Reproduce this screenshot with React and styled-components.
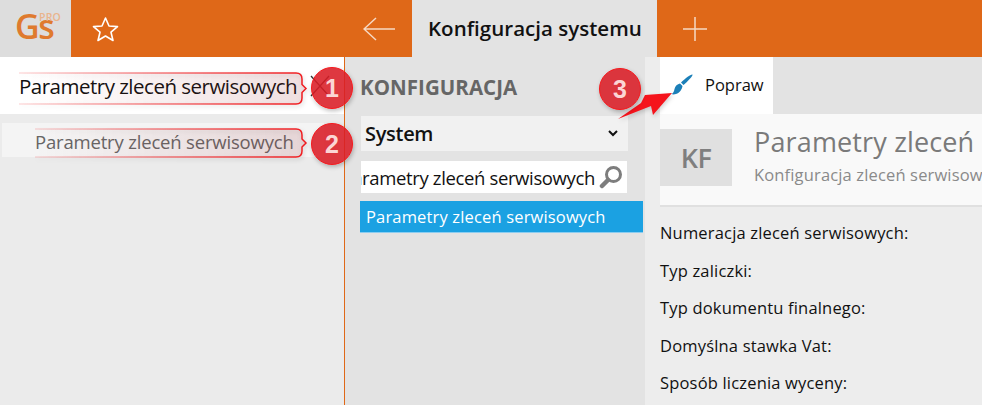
import React from "react";
import styled, { createGlobalStyle } from "styled-components";

const Global = createGlobalStyle`
  html, body { margin: 0; padding: 0; background: #ededed; }
  * { box-sizing: border-box; }
`;
const Page = styled.div`
  position: relative; width: 982px; height: 405px; overflow: hidden;
  font-family: "Open Sans", "Noto Sans", sans-serif; color: #111; background: #ededed;
  display: flex; flex-direction: column;
`;
const Header = styled.header`
  height: 57px; flex: none; display: flex; background: #df6818;
`;
const Logo = styled.div`
  width: 71px; background: #dddddd; color: #df7a2e; display: flex; align-items: flex-start;
  padding: 9px 0 0 15px;
`;
const LogoMark = styled.span`
  font-size: 34px; font-weight: 600; line-height: 1; letter-spacing: -1.4px; width: 24px;
`;
const Pro = styled.span`
  font-size: 10.5px; font-weight: 600; line-height: 1; margin-top: 3px; letter-spacing: 0.2px; color: #eab48c;
`;
const StarSlot = styled.div`
  width: 274px; padding-left: 21px; display: flex; align-items: center;
`;
const IconSlot = styled.div`
  width: ${p => p.$w}px; display: flex; align-items: center; justify-content: center;
`;
const ActiveTab = styled.div`
  width: 245px; background: #e3e3e3; padding: 0 0 2px 16px; display: flex; align-items: center;
  font-size: 20.5px; font-weight: 600; letter-spacing: 0.02px; color: #111;
`;
const Body = styled.div`flex: 1; display: flex; min-height: 0;`;
const Sidebar = styled.aside`
  width: 345px; flex: none; background: #ebebeb; border-right: 1px solid #df6818;
`;
const OpenItem = styled.div`
  height: 57px; background: #fff; padding: 0 14px 0 19px; display: flex; align-items: center;
  justify-content: space-between; font-size: 20.5px; letter-spacing: -0.5px; color: #111;
`;
const SubItem = styled.div`
  margin: 9px 0 0 2px; width: 322px; height: 34px; background: #f4f4f4; padding: 2px 0 0 33px;
  display: flex; align-items: center; font-size: 18.5px; letter-spacing: -0.18px; color: #666;
`;
const Middle = styled.section`
  width: 300px; flex: none; background: #e3e3e3; padding: 0 2px 0 15px;
  display: flex; flex-direction: column;
`;
const MidTitle = styled.h2`
  margin: 0; height: 59px; display: flex; align-items: center; font-size: 20.5px; font-weight: 700;
  color: #666; letter-spacing: 0.05px;
`;
const Select = styled.div`
  height: 35px; width: 267px; margin-left: 1px; background: #f1f1f1; padding: 0 10px 0 4px;
  display: flex; align-items: center; justify-content: space-between;
  font-size: 20px; font-weight: 600; letter-spacing: -0.3px;
`;
const Search = styled.div`
  height: 32px; width: 266px; margin: 10px 0 0 1px; background: #fff; display: flex;
  align-items: center; overflow: hidden; padding-right: 4px;
`;
const SearchText = styled.div`
  flex: 1; min-width: 0; display: flex; justify-content: flex-end; overflow: hidden; white-space: nowrap;
  font-size: 18.5px; letter-spacing: -0.36px; padding-right: 4px; color: #111;
`;
const ListItem = styled.div`
  height: 32px; margin-top: 8px; background: #1ba1e2; border-bottom: 1px solid #8ccdf0; color: #fff;
  padding-left: 6px; display: flex; align-items: center; font-size: 16.5px; letter-spacing: 0.16px;
`;
const Content = styled.main`
  flex: 1; min-width: 0; padding-left: 15px; background: #ededed; display: flex; flex-direction: column;
`;
const Toolbar = styled.div`height: 57px; flex: none; background: #e3e3e3; display: flex;`;
const ToolButton = styled.div`
  width: 113px; background: #fff; padding: 0 0 0 11px; display: flex; align-items: center; gap: 12px;
  font-size: 16.5px; letter-spacing: 0; padding-bottom: 2px;
`;
const Card = styled.div`
  height: 93px; flex: none; background: #f9f9f9; border-bottom: 2px solid #e0e0e0; display: flex;
  padding-top: 15px; gap: 22px; white-space: nowrap; overflow: hidden;
`;
const Badge = styled.div`
  width: 72px; height: 57px; flex: none; background: #e0e0e0; color: #7f7f7f; display: flex;
  align-items: center; justify-content: center; font-size: 27px; font-weight: 600; letter-spacing: -0.5px;
`;
const CardText = styled.div`display: flex; flex-direction: column;`;
const CardTitle = styled.div`
  font-size: 27px; line-height: 28px; color: #7a7a7a; letter-spacing: 0.15px; margin-top: -1px;
`;
const CardSub = styled.div`
  margin-top: 9px; font-size: 16.5px; line-height: 20px; color: #8a8a8a; letter-spacing: 0.15px;
`;
const Fields = styled.div`padding: 7px 0 0; display: flex; flex-direction: column;`;
const Field = styled.div`
  height: 37.5px; display: flex; align-items: center; font-size: 16.5px; letter-spacing: 0.18px; color: #111;
`;
const Overlay = styled.svg`
  position: absolute; left: 0; top: 0; width: 982px; height: 405px; pointer-events: none;
  filter: drop-shadow(1px 2px 2px rgba(0, 0, 0, 0.18));
`;
const Num = styled.div`
  position: absolute; left: ${p => p.$x - 21}px; top: ${p => p.$y - 21}px; width: 42px; height: 42px;
  border-radius: 50%; background: rgba(218, 28, 38, 0.88); border: 1.5px solid #f5181c;
  box-shadow: 1px 2px 4px rgba(0,0,0,.25); color: #fbd5d5; display: flex; align-items: center;
  justify-content: center; font-family: "Liberation Sans", sans-serif; font-weight: 700; font-size: 25px;
`;

const Callout = ({ id, x, y, w, h }) => {
  const r = x + w, m = y + h / 2;
  const d = `M${x} ${y} H${r - 6} Q${r} ${y} ${r} ${y + 6} V${m - 4} L${r + 4} ${m} L${r} ${m + 4} V${y + h - 6} Q${r} ${y + h} ${r - 6} ${y + h} H${x}`;
  return (
    <>
      <defs>
        <linearGradient id={id} gradientUnits="userSpaceOnUse" x1={x} x2={r} y1="0" y2="0">
          <stop offset="0" stopColor="#f01c20" stopOpacity="0.15" />
          <stop offset="1" stopColor="#f01c20" stopOpacity="1" />
        </linearGradient>
        <linearGradient id={id + "f"} gradientUnits="userSpaceOnUse" x1={x} x2={r} y1="0" y2="0">
          <stop offset="0" stopColor="#b03038" stopOpacity="0" />
          <stop offset="1" stopColor="#b03038" stopOpacity="0.13" />
        </linearGradient>
      </defs>
      <path d={d} fill={`url(#${id}f)`} stroke={`url(#${id})`} strokeWidth="1.5" />
    </>
  );
};

export default function App() {
  return (
    <Page>
      <Global />
      <Header>
        <Logo><LogoMark>Gs</LogoMark><Pro>PRO</Pro></Logo>
        <StarSlot>
          <svg width="27" height="26" viewBox="0 0 27 26" fill="none" stroke="#fff" strokeWidth="1.6" strokeLinejoin="round">
            <path d="M13.5 2 L17 10 L25.5 10.6 L19 16.2 L21 24.5 L13.5 20 L6 24.5 L8 16.2 L1.5 10.6 L10 10 Z" />
          </svg>
        </StarSlot>
        <IconSlot $w={67}>
          <svg width="32" height="24" viewBox="0 0 32 24" fill="none" stroke="#f6d9c4" strokeWidth="1.5">
            <path d="M32 12 H1 M13 1 L1 12 L13 23" />
          </svg>
        </IconSlot>
        <ActiveTab>Konfiguracja systemu</ActiveTab>
        <IconSlot $w={75}>
          <svg width="24" height="24" viewBox="0 0 24 24" fill="none" stroke="#f6d9c4" strokeWidth="1.5">
            <path d="M12 0 V24 M0 12 H24" />
          </svg>
        </IconSlot>
      </Header>
      <Body>
        <Sidebar>
          <OpenItem>
            <span>Parametry zleceń serwisowych</span>
            <svg width="20" height="22" viewBox="0 0 20 22" fill="none" stroke="#333" strokeWidth="1.3">
              <path d="M1 1 L19 21 M19 1 L1 21" />
            </svg>
          </OpenItem>
          <SubItem>Parametry zleceń serwisowych</SubItem>
        </Sidebar>
        <Middle>
          <MidTitle>KONFIGURACJA</MidTitle>
          <Select>
            System
            <svg width="10" height="7" viewBox="0 0 10 7" fill="none" stroke="#111" strokeWidth="2">
              <path d="M1 1 L5 5 L9 1" />
            </svg>
          </Select>
          <Search>
            <SearchText>Parametry zleceń serwisowych</SearchText>
            <svg width="24" height="24" viewBox="0 0 24 24" fill="none" stroke="#7d7d7d">
              <circle cx="14.5" cy="9.5" r="7" strokeWidth="3" />
              <path d="M9 15 L3 21" strokeWidth="4.5" strokeLinecap="round" />
            </svg>
          </Search>
          <ListItem>Parametry zleceń serwisowych</ListItem>
        </Middle>
        <Content>
          <Toolbar>
            <ToolButton>
              <svg width="22" height="22" viewBox="0 0 22 22" fill="#1b7fb8">
                <path d="M21.5 0.5 C22 2 17 7 12.5 11 L10 8.5 C14 4.5 20 0 21.5 0.5 Z" />
                <path d="M9 9.5 L11.5 12 C11 15 9 19 5 20 C3.5 20.5 1.5 20.5 0.5 20 C2.5 19 3 17.5 3.5 15 C4 12 6.5 10 9 9.5 Z" />
              </svg>
              Popraw
            </ToolButton>
          </Toolbar>
          <Card>
            <Badge>KF</Badge>
            <CardText>
              <CardTitle>Parametry zleceń serwisowych</CardTitle>
              <CardSub>Konfiguracja zleceń serwisowych</CardSub>
            </CardText>
          </Card>
          <Fields>
            <Field>Numeracja zleceń serwisowych:</Field>
            <Field>Typ zaliczki:</Field>
            <Field>Typ dokumentu finalnego:</Field>
            <Field>Domyślna stawka Vat:</Field>
            <Field>Sposób liczenia wyceny:</Field>
          </Fields>
        </Content>
      </Body>
      <Overlay viewBox="0 0 982 405">
        <Callout id="c1" x={19} y={73} w={283} h={31} />
        <Callout id="c2" x={35} y={129} w={267} h={28} />
        <path d="M618 119 L641 103 L645 95 L672 93 L653 115 L651 106 Z" fill="#f5141c" />
      </Overlay>
      <Num $x={332} $y={88}>1</Num>
      <Num $x={332} $y={144}>2</Num>
      <Num $x={620} $y={89}>3</Num>
    </Page>
  );
}
